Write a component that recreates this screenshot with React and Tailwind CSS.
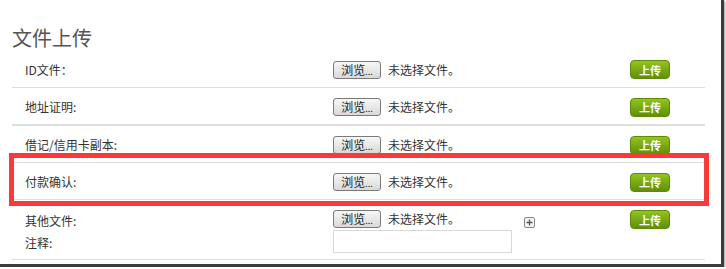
import React from 'react';

const rows = [
  { label: 'ID文件：', h: 'h-[38px] border-b' },
  { label: '地址证明:', h: 'h-[38px] border-b-2' },
  { label: '借记/信用卡副本:', h: 'h-[37px] border-b' },
  { label: '付款确认:', h: 'h-[37px] border-b' },
];

function BrowseButton() {
  return (
    <button className="h-[18px] w-[48px] shrink-0 rounded-[3px] border border-[#7a7a7a] bg-gradient-to-b from-[#f7f7f7] to-[#d9d9d9] text-[12px] leading-[16px] text-[#222]">
      浏览<span className="text-[9px]">...</span>
    </button>
  );
}

function UploadButton() {
  return (
    <button className="h-[19px] w-[40px] shrink-0 rounded-[4px] border border-[#5d8a08] bg-gradient-to-b from-[#93c41e] to-[#5f9006] text-[11px] font-bold leading-[16px] text-white">
      上传
    </button>
  );
}

function FileField() {
  return (
    <div className="flex items-center">
      <BrowseButton />
      <span className="ml-[7px] text-[12px] text-[#333]">未选择文件。</span>
    </div>
  );
}

export default function App() {
  return (
    <div
      className="relative h-[267px] w-[724px] border-b-[3px] border-r-[3px] border-[#3c3c3c] bg-white shadow-[1px_1px_2px_rgba(0,0,0,0.4)]"
      style={{ fontFamily: '"Noto Sans CJK SC", "Liberation Sans", sans-serif' }}
    >
      <div className="ml-[12px] w-[693px]">
        <h2 className="pt-[26px] text-[20px] font-normal leading-[24px] text-[#555]">文件上传</h2>

        {rows.map((r) => (
          <div key={r.label} className={`flex items-center border-[#dedede] pt-[2px] ${r.h}`}>
            <div className="w-[321px] pl-[13px] text-[12px] text-[#333]">{r.label}</div>
            <div className="w-[297px]">
              <FileField />
            </div>
            <UploadButton />
          </div>
        ))}

        <div className="flex h-[60px] items-start border-b border-[#dedede] pt-[10px]">
          <div className="w-[321px] pl-[13px] text-[12px] leading-[22px] text-[#333]">
            <div>其他文件:</div>
            <div>注释:</div>
          </div>
          <div className="w-[297px]">
            <div className="flex items-center">
              <div className="w-[191px]">
                <FileField />
              </div>
              <div className="mt-[6px] flex h-[11px] w-[11px] items-center justify-center rounded-[2px] border border-[#888] bg-[#f4f4f4]">
                <svg width="7" height="7" viewBox="0 0 7 7">
                  <path d="M3.5 0.5v6M0.5 3.5h6" stroke="#555" strokeWidth="1.3" />
                </svg>
              </div>
            </div>
            <input
              type="text"
              className="mt-[2px] h-[23px] w-[179px] border border-[#d8d8d8] bg-white outline-none"
            />
          </div>
          <UploadButton />
        </div>
      </div>

      {/* red highlight annotation */}
      <div className="pointer-events-none absolute left-[9px] top-[153px] h-[53px] w-[700px] border-[5px] border-[#f93a3a]" />
    </div>
  );
}
